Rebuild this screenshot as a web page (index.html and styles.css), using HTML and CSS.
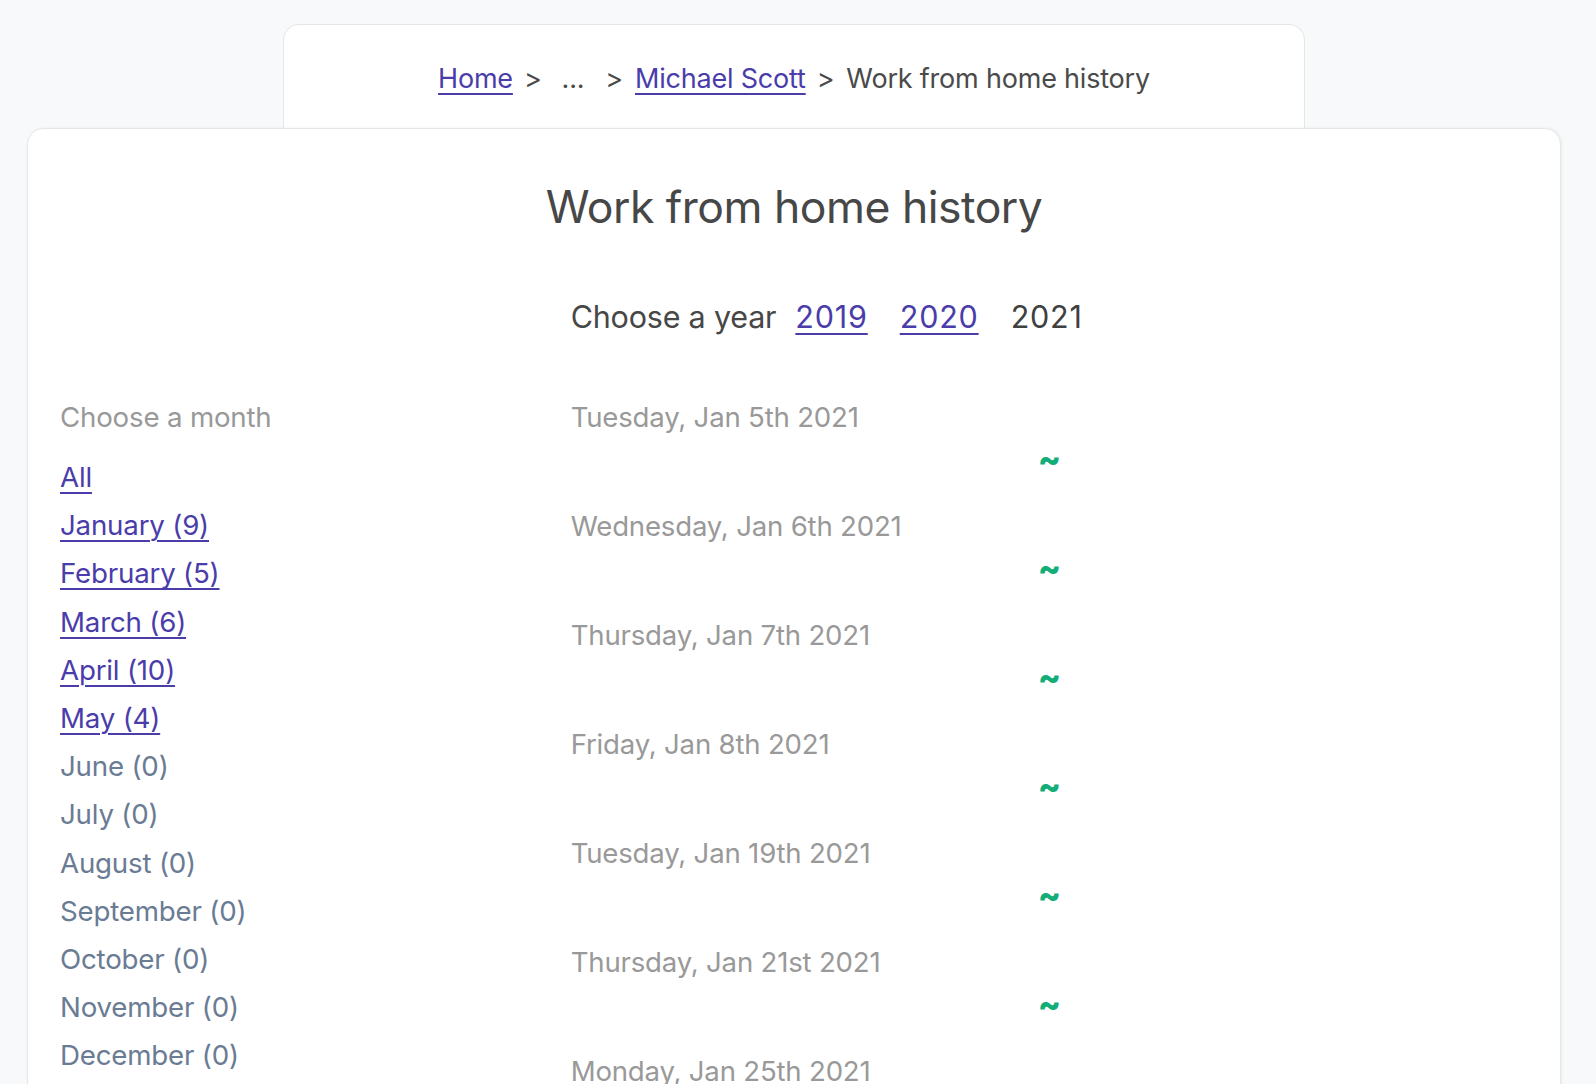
FILE: index.html
```html
<!DOCTYPE html>
<html lang="en">
<head>
<meta charset="utf-8">
<title>Work from home history</title>
<link rel="stylesheet" href="styles.css">
</head>
<body>
<div class="page">
  <nav class="crumbs">
    <a href="#" class="link">Home</a><span class="sep">&gt;</span><span class="dots">...</span><span class="sep">&gt;</span><a href="#" class="link">Michael Scott</a><span class="sep">&gt;</span><span class="current">Work from home history</span>
  </nav>
  <main class="card">
    <h1 class="title">Work from home history</h1>
    <div class="grid years-row">
      <div></div>
      <div class="years">
        <span class="years-label">Choose a year</span>
        <a href="#" class="link year">2019</a>
        <a href="#" class="link year">2020</a>
        <span class="year current-year">2021</span>
      </div>
    </div>
    <div class="grid">
      <aside class="months">
        <div class="months-label">Choose a month</div>
        <ul class="month-list">
          <li><a href="#" class="link">All</a></li>
          <li><a href="#" class="link">January (9)</a></li>
          <li><a href="#" class="link">February (5)</a></li>
          <li><a href="#" class="link">March (6)</a></li>
          <li><a href="#" class="link">April (10)</a></li>
          <li><a href="#" class="link">May (4)</a></li>
          <li class="off">June (0)</li>
          <li class="off">July (0)</li>
          <li class="off">August (0)</li>
          <li class="off">September (0)</li>
          <li class="off">October (0)</li>
          <li class="off">November (0)</li>
          <li class="off">December (0)</li>
        </ul>
      </aside>
      <section class="days">
        <div class="day"><div class="date">Tuesday, Jan 5th 2021</div><div class="mark">~</div></div>
        <div class="day"><div class="date">Wednesday, Jan 6th 2021</div><div class="mark">~</div></div>
        <div class="day"><div class="date">Thursday, Jan 7th 2021</div><div class="mark">~</div></div>
        <div class="day"><div class="date">Friday, Jan 8th 2021</div><div class="mark">~</div></div>
        <div class="day"><div class="date">Tuesday, Jan 19th 2021</div><div class="mark">~</div></div>
        <div class="day"><div class="date">Thursday, Jan 21st 2021</div><div class="mark">~</div></div>
        <div class="day"><div class="date">Monday, Jan 25th 2021</div><div class="mark">~</div></div>
      </section>
    </div>
  </main>
</div>
</body>
</html>
```
FILE: styles.css
```css
html, body {
  margin: 0;
  padding: 0;
}
body {
  background: #f8f9fb;
  font-family: Inter, "Noto Sans", "Liberation Sans", sans-serif;
  color: #4a4a4a;
  overflow: hidden;
}
.page {
  width: 1588px;
  padding-top: 24px;
  display: flex;
  flex-direction: column;
  align-items: center;
}
.link {
  color: #4a3daa;
  text-decoration: underline;
  text-decoration-thickness: 2px;
  text-underline-offset: 5px;
}
.crumbs {
  box-sizing: border-box;
  width: 1022px;
  height: 104px;
  background: #fff;
  border: 1px solid #e6e6e6;
  border-bottom: none;
  border-radius: 16px 16px 0 0;
  display: flex;
  justify-content: center;
  align-items: center;
  padding-top: 4px;
  font-size: 27px;
  line-height: 40px;
  letter-spacing: -0.2px;
}
.sep {
  margin: 0 12px 0 11px;
}
.dots {
  margin: 0 10px 0 8px;
}
.current {
  color: #4a4a4a;
}
.card {
  box-sizing: border-box;
  width: 1534px;
  min-height: 980px;
  background: #fff;
  border: 1px solid #e6e6e6;
  border-radius: 16px;
  box-shadow: 1px 0 3px rgba(0, 0, 0, 0.06);
  padding: 46px 32px 40px;
}
.title {
  margin: 0;
  text-align: center;
  font-size: 44.5px;
  line-height: 64px;
  font-weight: 400;
  letter-spacing: -0.5px;
  color: #474747;
}
.grid {
  display: grid;
  grid-template-columns: 1fr 2fr;
  column-gap: 32px;
}
.years-row {
  margin-top: 58px;
}
.years {
  display: flex;
  align-items: center;
  font-size: 30.5px;
  line-height: 40px;
  letter-spacing: -0.2px;
}
.years-label {
  color: #474747;
  margin-right: 3px;
}
.year {
  margin: 0 16px;
  letter-spacing: 0.8px;
}
.current-year {
  color: #404040;
}
.grid + .grid {
  margin-top: 60px;
}
.months-label {
  color: #999;
  font-size: 27.7px;
  line-height: 40px;
  letter-spacing: -0.2px;
}
.month-list {
  list-style: none;
  margin: 16px 0 0;
  padding: 0;
  font-size: 27.7px;
  line-height: 48.2px;
  letter-spacing: -0.2px;
}
.month-list .off {
  color: #6a7b94;
}
.days {
  display: flex;
  flex-direction: column;
}
.day {
  height: 109px;
}
.date {
  color: #999;
  font-size: 27.6px;
  line-height: 40px;
  letter-spacing: -0.2px;
}
.mark {
  text-align: center;
  color: #12ad78;
  font-weight: 800;
  font-size: 34px;
  line-height: 44px;
}
```
